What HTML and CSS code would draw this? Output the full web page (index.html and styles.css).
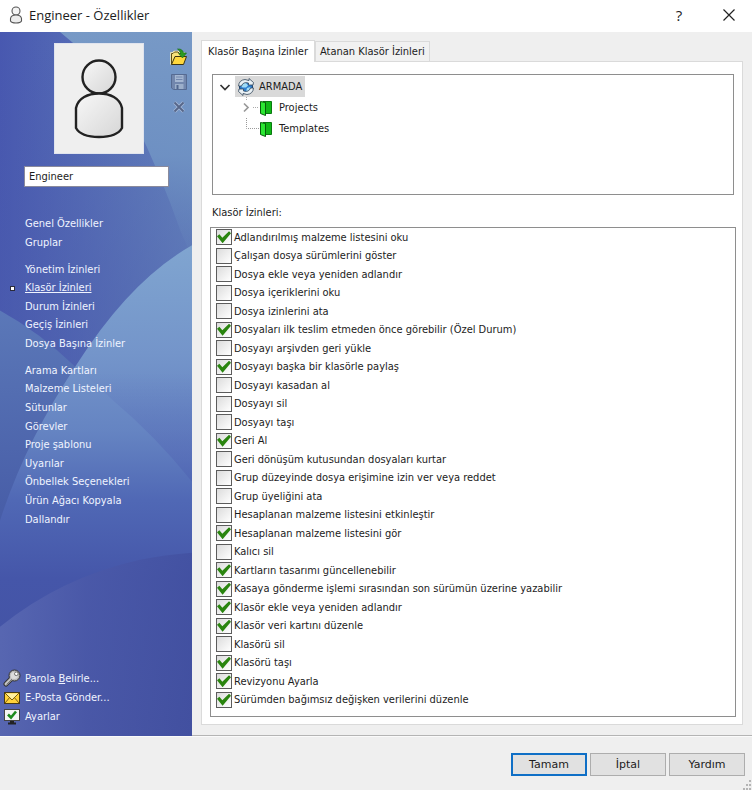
FILE: index.html
```html
<!DOCTYPE html>
<html lang="tr">
<head>
<meta charset="utf-8">
<title>Engineer - Özellikler</title>
<link rel="stylesheet" href="styles.css">
</head>
<body>
<div class="window">
  <header class="titlebar">
    <svg class="title-icon" viewBox="0 0 14 18" width="14" height="18" aria-hidden="true">
      <circle cx="7" cy="5" r="4" fill="#f4f4f4" stroke="#555" stroke-width="1.1"/>
      <path d="M1.500 15V12.500Q2 9 7 9T12.500 12.500V15Q11.500 17 7 17T1.500 15Z" fill="#ececec" stroke="#555" stroke-width="1.100"/>
    </svg>
    <h1 class="title">Engineer - Özellikler</h1>
    <button class="caption-btn" type="button" aria-label="Yardım">?</button>
    <button class="caption-btn" type="button" aria-label="Kapat">
      <svg viewBox="0 0 12 12" width="12" height="12"><path d="M.5.5l11 11M11.500.5l-11 11" stroke="#222" stroke-width="1.200" fill="none"/></svg>
    </button>
  </header>

  <div class="body">
    <aside class="sidebar">
      <svg class="backdrop" viewBox="0 0 192 703" preserveAspectRatio="none" aria-hidden="true">
        <defs>
          <linearGradient id="base" x1="0" y1="0" x2="1" y2="0"><stop offset="0" stop-color="#4858b0"/><stop offset="1" stop-color="#6888be"/></linearGradient>
          <linearGradient id="beam" x1="0" y1="0" x2="0" y2="1"><stop offset="0" stop-color="#7799c6"/><stop offset=".55" stop-color="#7093c4" stop-opacity=".9"/><stop offset="1" stop-color="#6686bd" stop-opacity=".1"/></linearGradient>
          <linearGradient id="left" x1="0" y1="0" x2="0" y2="1"><stop offset="0" stop-color="#5b78b8"/><stop offset="1" stop-color="#465ba6"/></linearGradient>
          <linearGradient id="hill" x1="0" y1="0" x2="0" y2="1"><stop offset="0" stop-color="#80a5d0"/><stop offset=".22" stop-color="#7495ca"/><stop offset=".38" stop-color="#6584c2"/><stop offset=".52" stop-color="#5068b5"/><stop offset=".68" stop-color="#4556a9"/><stop offset="1" stop-color="#4250a0"/></linearGradient>
          <linearGradient id="dim" x1="0" y1="0" x2="0" y2="1"><stop offset="0" stop-color="#5569b6" stop-opacity="0"/><stop offset=".7" stop-color="#5569b6" stop-opacity=".5"/><stop offset="1" stop-color="#4c60b0" stop-opacity=".5"/></linearGradient>
          <linearGradient id="floor" x1="0" y1="0" x2="1" y2="0"><stop offset="0" stop-color="#5c6bb4"/><stop offset=".45" stop-color="#4b59a8"/><stop offset="1" stop-color="#4250a0"/></linearGradient>
          <linearGradient id="mid" x1="0" y1="0" x2="0" y2="1"><stop offset="0" stop-color="#4a5bab" stop-opacity="0"/><stop offset="1" stop-color="#4a5bab" stop-opacity=".6"/></linearGradient>
        </defs>
        <rect width="192" height="703" fill="url(#base)"/>
        <rect width="192" height="370" fill="url(#mid)"/>
        <path d="M60 0H192V225L181 200Q160 140 135 90T60 0Z" fill="url(#beam)"/>
        <path d="M0 278Q40 300 75 334L80 500H0Z" fill="url(#left)"/>
        <path d="M192 213Q130 248 76 333Q25 410 0 488V703H192Z" fill="url(#hill)"/>
        <path d="M82 340Q97 352 112 367Q155 403 192 449V340Z" fill="url(#dim)"/>
        <path d="M0 594Q60 545 140 527Q165 522 192 520V703H0Z" fill="url(#floor)" opacity=".8"/>
      </svg>

      <div class="profile">
        <div class="portrait">
          <svg viewBox="0 0 50 80" width="50" height="80" aria-hidden="true">
            <defs><linearGradient id="skin" x1="0" y1="0" x2="1" y2="1"><stop offset="0" stop-color="#f8f8f8"/><stop offset="1" stop-color="#d6d6d6"/></linearGradient></defs>
            <circle cx="25" cy="18" r="16.500" fill="url(#skin)" stroke="#222" stroke-width="2.400"/>
            <path d="M2 69V49C4 39 14 34.500 25 34.500S46 39 48 49V69Q43 78 25 78T2 69Z" fill="url(#skin)" stroke="#222" stroke-width="2.400"/>
          </svg>
        </div>
        <div class="portrait-tools">
          <button type="button" class="tool" aria-label="Aç">
            <svg viewBox="0 0 18 18" width="18" height="18"><path d="M1.500 16.500V5.500H3L4.500 4H8L9.500 5.500H13.500V8" fill="#fff0a0" stroke="#fff3b8" stroke-width="2.500"/><path d="M1.500 16.500V5.500H3L4.500 4H8L9.500 5.500H13.500V8" fill="#f7e27a" stroke="#5b4c13"/><path d="M1.500 16.500L5 8.500H16.500L13.500 16.500Z" fill="#ffd83c" stroke="#3b3413"/><path d="M7.500 1Q12.500 .5 13.500 5H16.500L12.500 10 8.500 5.500H10.500Q10.500 3 7.500 1Z" fill="#2b9a22" stroke="#156b12" stroke-width=".6"/></svg>
          </button>
          <button type="button" class="tool" aria-label="Kaydet" disabled>
            <svg viewBox="0 0 18 18" width="18" height="18"><path d="M1.500 1.500H16.500V16.500H3.500L1.500 15Z" fill="#7287ad" stroke="#566b92"/><path d="M5 2H13.500V9H5Z" fill="#a5b7d2"/><path d="M6 4H12.500M6 6.500H12.500" stroke="#7287ad"/><path d="M5 11H13.500V16H5Z" fill="#9cafca"/><path d="M6.500 12H8.500V16H6.500Z" fill="#51678f"/></svg>
          </button>
          <button type="button" class="tool" aria-label="Sil" disabled>
            <svg viewBox="0 0 18 18" width="18" height="18"><path d="M4.500 4.500L13.500 13.500M13.500 4.500L4.500 13.500" stroke="#a3b6d6" stroke-width="3.600"/><path d="M4.500 4.500L13.500 13.500M13.500 4.500L4.500 13.500" stroke="#566689" stroke-width="1.800"/></svg>
          </button>
        </div>
      </div>
      <input class="name" type="text" value="Engineer" aria-label="Ad">

      <nav class="nav">
        <a href="#">Genel Özellikler</a>
        <a href="#">Gruplar</a>
        <a href="#" class="group-start">Yönetim İzinleri</a>
        <a href="#" class="current" aria-current="page"><span>Klasör İzinleri</span></a>
        <a href="#">Durum İzinleri</a>
        <a href="#">Geçiş İzinleri</a>
        <a href="#">Dosya Başına İzinler</a>
        <a href="#" class="group-start">Arama Kartları</a>
        <a href="#">Malzeme Listeleri</a>
        <a href="#">Sütunlar</a>
        <a href="#">Görevler</a>
        <a href="#">Proje şablonu</a>
        <a href="#">Uyarılar</a>
        <a href="#">Önbellek Seçenekleri</a>
        <a href="#">Ürün Ağacı Kopyala</a>
        <a href="#">Dallandır</a>
      </nav>

      <div class="actions">
        <a href="#">
          <svg viewBox="0 0 18 18" width="18" height="18" aria-hidden="true"><path d="M3 15L9 9" stroke="#333" stroke-width="5" stroke-linecap="round"/><circle cx="11.500" cy="6.500" r="5.500" fill="#b9b9b9" stroke="#333"/><path d="M3 15L9 9" stroke="#c4c4c4" stroke-width="3" stroke-linecap="round"/><path d="M3.500 15.500L9 10" stroke="#777"/><circle cx="11.300" cy="6.500" r="3.600" fill="#dcdcdc"/><circle cx="13.300" cy="4.800" r="1.800" fill="#fff" stroke="#555" stroke-width=".8"/></svg>
          <span>Parola <u>B</u>elirle...</span></a>
        <a href="#">
          <svg viewBox="0 0 18 18" width="18" height="18" aria-hidden="true"><rect x="1.500" y="4.500" width="15" height="11" fill="#ffd23a" stroke="#4a3b12"/><path d="M2.500 5.500H15.500L9 11.500Z" fill="#fff0a0"/><path d="M2 5L9 12 16 5M2 15L6.500 9.700M16 15L11.500 9.700" fill="none" stroke="#7a5d12"/></svg>
          <span>E-Posta Gönder...</span></a>
        <a href="#">
          <svg viewBox="0 0 18 18" width="18" height="18" aria-hidden="true"><rect x="1.500" y="2.500" width="15" height="11" fill="#f5f5f5" stroke="#444"/><path d="M7 14H11V15.500H13V17.500H5V15.500H7Z" fill="#222"/><path d="M5 7.500L8 10.500 13 4.500" fill="none" stroke="#1d8a1d" stroke-width="2.600"/></svg>
          <span>Ayarlar</span></a>
      </div>
    </aside>

    <main class="content">
      <div class="tabs" role="tablist">
        <button type="button" class="tab tab-active" role="tab" aria-selected="true">Klasör Başına İzinler</button>
        <button type="button" class="tab" role="tab" aria-selected="false">Atanan Klasör İzinleri</button>
      </div>
      <section class="panel">
        <ul class="tree">
          <li class="node root">
            <svg class="chevron" viewBox="0 0 12 12" width="12" height="12" aria-hidden="true"><path d="M1.500 4L6 8.500 10.500 4" fill="none" stroke="#333" stroke-width="1.700"/></svg>
            <span class="selected">
              <svg viewBox="0 0 18 18" width="18" height="18" aria-hidden="true"><circle cx="9" cy="9" r="6.500" fill="#2f7fd0" stroke="#123a6b"/><path d="M4.500 9Q6 4 9 5L11 7.500 9 9.500 6 9.500ZM10 10L13.500 9 12 13 9 14Z" fill="#9fdcf7"/><path d="M1.500 8Q2 2 8 1.500L12 2.500V.5L16.500 4.500 16 7 11.500 7V5Q6 3.500 4.500 8Z" fill="#eaf1f5" stroke="#33485c" stroke-width=".8"/><path d="M16.500 10Q16 16 10 16.500L6 15.500V17.500L1.500 13.500 2 11 6.500 11V13Q12 14.500 13.500 10Z" fill="#eaf1f5" stroke="#33485c" stroke-width=".8"/></svg>
              ARMADA</span>
          </li>
          <li class="node child">
            <svg class="branch" viewBox="0 0 18 21" width="18" height="21" aria-hidden="true"><path d="M3 6.500L7 10.500 3 14.500" fill="none" stroke="#999" stroke-width="1.700"/><path d="M12 10.500H18M5.500 0V3" stroke="#aaa" stroke-dasharray="1 1"/></svg>
            <svg class="folder" viewBox="0 0 14 16" width="14" height="16" aria-hidden="true"><path d="M4 1.500H12.500V13.500H4Z" fill="#10b816" stroke="#0a7a10"/><path d="M1.500 1.500L6.500 2.500V15.500L1.500 13.500Z" fill="#2be832" stroke="#075c0a"/></svg>
            <span>Projects</span>
          </li>
          <li class="node child">
            <svg class="branch" viewBox="0 0 18 21" width="18" height="21" aria-hidden="true"><path d="M5.500 0V10.500H18" fill="none" stroke="#999" stroke-dasharray="1 1"/></svg>
            <svg class="folder" viewBox="0 0 14 16" width="14" height="16" aria-hidden="true"><path d="M4 1.500H12.500V13.500H4Z" fill="#10b816" stroke="#0a7a10"/><path d="M1.500 1.500L6.500 2.500V15.500L1.500 13.500Z" fill="#2be832" stroke="#075c0a"/></svg>
            <span>Templates</span>
          </li>
        </ul>

        <h2 class="list-title">Klasör İzinleri:</h2>
        <div class="permissions">
          <label><input type="checkbox" checked>Adlandırılmış malzeme listesini oku</label>
          <label><input type="checkbox">Çalışan dosya sürümlerini göster</label>
          <label><input type="checkbox">Dosya ekle veya yeniden adlandır</label>
          <label><input type="checkbox">Dosya içeriklerini oku</label>
          <label><input type="checkbox">Dosya izinlerini ata</label>
          <label><input type="checkbox" checked>Dosyaları ilk teslim etmeden önce görebilir (Özel Durum)</label>
          <label><input type="checkbox">Dosyayı arşivden geri yükle</label>
          <label><input type="checkbox" checked>Dosyayı başka bir klasörle paylaş</label>
          <label><input type="checkbox">Dosyayı kasadan al</label>
          <label><input type="checkbox">Dosyayı sil</label>
          <label><input type="checkbox">Dosyayı taşı</label>
          <label><input type="checkbox" checked>Geri Al</label>
          <label><input type="checkbox">Geri dönüşüm kutusundan dosyaları kurtar</label>
          <label><input type="checkbox">Grup düzeyinde dosya erişimine izin ver veya reddet</label>
          <label><input type="checkbox">Grup üyeliğini ata</label>
          <label><input type="checkbox">Hesaplanan malzeme listesini etkinleştir</label>
          <label><input type="checkbox" checked>Hesaplanan malzeme listesini gör</label>
          <label><input type="checkbox">Kalıcı sil</label>
          <label><input type="checkbox" checked>Kartların tasarımı güncellenebilir</label>
          <label><input type="checkbox" checked>Kasaya gönderme işlemi sırasından son sürümün üzerine yazabilir</label>
          <label><input type="checkbox" checked>Klasör ekle veya yeniden adlandır</label>
          <label><input type="checkbox" checked>Klasör veri kartını düzenle</label>
          <label><input type="checkbox">Klasörü sil</label>
          <label><input type="checkbox" checked>Klasörü taşı</label>
          <label><input type="checkbox" checked>Revizyonu Ayarla</label>
          <label><input type="checkbox" checked>Sürümden bağımsız değişken verilerini düzenle</label>
        </div>
      </section>
    </main>
  </div>

  <footer class="footer">
    <button type="button" class="btn btn-default">Tamam</button>
    <button type="button" class="btn">İptal</button>
    <button type="button" class="btn">Yardım</button>
    <svg class="grip" viewBox="0 0 10 10" width="10" height="10" aria-hidden="true"><path d="M7 0h2v2h-2zM4 4h2v2h-2zM7 4h2v2h-2zM1 8h2v2h-2zM4 8h2v2h-2zM7 8h2v2h-2z" fill="#b4b4b4"/></svg>
  </footer>
</div>
</body>
</html>
```

FILE: styles.css
```css
* {
  box-sizing: border-box;
}

body {
  margin: 0;
  background: #efefef;
  color: #1c1c1c;
  font-family: "DejaVu Sans Condensed", "Noto Sans", sans-serif;
  font-size: 11px;
}

button,
input {
  font: inherit;
  color: inherit;
}

svg {
  display: block;
  flex: none;
}

.window {
  display: flex;
  flex-direction: column;
  min-height: 100vh;
}

/* Title bar */
.titlebar {
  display: flex;
  align-items: center;
  height: 32px;
  padding: 0 2px 2px 9px;
  background: #fff;
}

.title {
  flex: 1;
  margin: 0 0 0 6px;
  font-family: "Open Sans", "Noto Sans", sans-serif;
  font-size: 13px;
  font-weight: 400;
}

.caption-btn {
  display: flex;
  align-items: center;
  justify-content: center;
  width: 42px;
  height: 30px;
  margin-left: 8px;
  padding: 0;
  border: 0;
  background: none;
  font-family: "Open Sans", sans-serif;
  font-size: 15px;
}

.body {
  display: flex;
  flex: 1;
}

/* Sidebar */
.sidebar {
  position: relative;
  display: flex;
  flex: none;
  flex-direction: column;
  width: 192px;
  padding: 11px 0;
  color: #f0f4ff;
}

.backdrop {
  position: absolute;
  inset: 0;
  width: 100%;
  height: 100%;
}

.profile,
.name,
.nav,
.actions {
  position: relative;
}

.profile {
  display: flex;
  justify-content: space-between;
  padding: 0 4px 0 54px;
}

.portrait {
  display: flex;
  align-items: center;
  justify-content: center;
  width: 90px;
  height: 111px;
  border: 1px solid #e0e4ee;
  background: #efefef;
}

.portrait-tools {
  display: flex;
  flex-direction: column;
  gap: 7px;
  padding-top: 5px;
}

.tool {
  width: 18px;
  height: 18px;
  padding: 0;
  border: 0;
  background: none;
}

.name {
  height: 21px;
  margin: 12px 23px 0 24px;
  padding: 0 4px;
  border: 1px solid #8a8a9c;
  border-radius: 0;
  background: #fff;
  color: #1c1c1c;
}

.nav {
  display: flex;
  flex: 1;
  flex-direction: column;
  margin: 28px 0 140px;
}

.nav a {
  display: flex;
  flex: 1 0 auto;
  align-items: center;
  padding-left: 25px;
  color: inherit;
  line-height: 18px;
  text-decoration: none;
}

.nav .group-start {
  margin-top: 8px;
}

.nav .current {
  padding-left: 10px;
  gap: 10px;
  text-decoration: underline;
}

.current::before {
  content: "";
  box-sizing: border-box;
  width: 5px;
  height: 5px;
  border: 1px solid #2b2b3a;
  background: #fff;
}

.actions a {
  display: flex;
  align-items: center;
  height: 18px;
  margin-bottom: 1px;
  padding-left: 3px;
  gap: 4px;
  color: inherit;
  text-decoration: none;
}

.actions a:last-child {
  margin-bottom: 0;
}

/* Tab area */
.content {
  display: flex;
  flex: 1;
  flex-direction: column;
  min-width: 0;
  padding: 8px 9px 10px;
  border-bottom: 1px solid #b4b4b4;
}

.tabs {
  display: flex;
  align-items: flex-end;
}

.tab {
  height: 20px;
  padding: 0 4px;
  border: 1px solid #dadada;
  border-bottom: 0;
  background: #f1f1f1;
  white-space: nowrap;
}

.tab-active {
  position: relative;
  height: 22px;
  margin-bottom: -1px;
  padding: 0 6px;
  background: #fff;
}

.panel {
  display: flex;
  flex: 1;
  flex-direction: column;
  padding: 12px 6px 7px 8px;
  border: 1px solid #dadada;
  background: #fff;
}

.tree {
  height: 121px;
  margin: 0 2px;
  padding: 1px 0 0;
  border: 1px solid #8e8e8e;
  list-style: none;
}

.node {
  display: flex;
  align-items: center;
  height: 21px;
}

.root {
  padding-left: 6px;
  gap: 4px;
}

.selected {
  display: flex;
  align-items: center;
  height: 21px;
  padding: 0 3px 0 2px;
  gap: 4px;
  background: #d9d9d9;
}

.child {
  padding-left: 28px;
}

.folder {
  margin: 0 6px 0 0;
}

.list-title {
  margin: 10px 2px 6px;
  font-size: 11px;
  font-weight: 400;
  line-height: 16px;
}

.permissions {
  display: flex;
  flex: 1;
  flex-direction: column;
  padding: 0 5px 7px;
  border: 1px solid #8e8e8e;
}

.permissions label {
  display: flex;
  flex: 1 0 auto;
  align-items: center;
  min-height: 18px;
  gap: 2px;
}

.permissions input {
  display: flex;
  flex: none;
  align-items: center;
  justify-content: center;
  width: 16px;
  height: 16px;
  margin: 0;
  border: 1px solid #5c5c5c;
  background: linear-gradient(135deg, #dcdcdc, #fff);
  appearance: none;
}

.permissions input:checked::before {
  content: "";
  flex: none;
  width: 14px;
  height: 12px;
  background: #2a850f;
  clip-path: polygon(0 42%, 17% 26%, 38% 54%, 86% 0, 100% 16%, 40% 100%);
}

/* Dialog buttons */
.footer {
  position: relative;
  display: flex;
  justify-content: flex-end;
  padding: 16px 7px 14px;
  gap: 3px;
  border-top: 1px solid #fafafa;
}

.btn {
  width: 76px;
  height: 23px;
  padding: 0;
  border: 1px solid #adadad;
  background: #e1e1e1;
  font-family: "DejaVu Sans", sans-serif;
}

.btn-default {
  border: 2px solid #0f6fc6;
}

.grip {
  position: absolute;
  right: 0;
  bottom: 0;
}
```
